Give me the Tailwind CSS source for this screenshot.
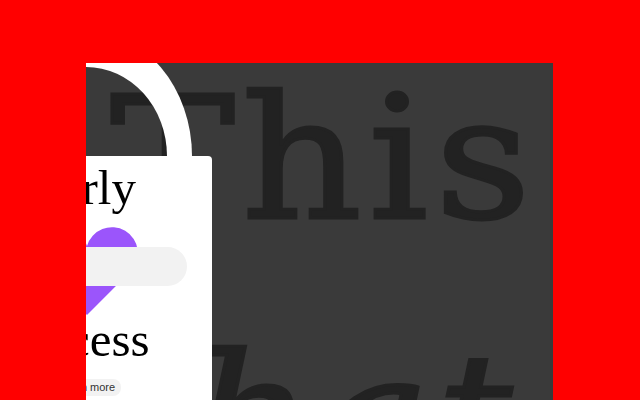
<!DOCTYPE html>
<html lang="en">
<head>
    <meta charset="UTF-8">
    <title>Early access</title>
    <script src="https://cdn.jsdelivr.net/npm/@tailwindcss/browser@4"></script>
</head>
<body class="bg-[#ff0000] w-[640px] h-[400px] overflow-hidden">
    <div class="relative ml-[86px] mt-[63px] w-[467px] h-[337px] bg-[#3a3a3a] overflow-hidden">
        <!-- big background words -->
        <div class="font-['DejaVu_Serif',serif] text-[170px] leading-[258px] tracking-[6px] text-[#222222] [-webkit-text-stroke:3px_#222222] pl-[22px] -mt-[33px] whitespace-nowrap scale-x-[1.1] origin-left">
            <p>This</p>
            <p class="italic">that</p>
        </div>

        <!-- tag: handle + card -->
        <div class="absolute left-[-124px] top-0 w-[250px] h-[337px]">
            <div class="absolute left-[18px] top-[-32px] w-[212px] h-[250px] rounded-[106px/125px] border-x-[25px] border-t-[36px] border-b-0 border-white"></div>
            <div class="absolute left-0 top-[93px] w-[250px] h-[300px] bg-white rounded-[4px] flex flex-col items-center font-['Liberation_Serif',serif] text-black">
                <p class="text-[49px] leading-[50px] mt-[7px]">early</p>
                <svg class="absolute left-0 top-0" width="250" height="170" viewBox="0 0 250 170">
                    <path d="M125 159 L168.4 115.6 A26 26 0 1 0 125 90 A26 26 0 1 0 81.6 115.6 Z" fill="#9b55fb"/>
                </svg>
                <p class="text-[49px] leading-[50px] mt-[102px]">access</p>
                <span class="mt-[14px] px-[6px] h-[17px] leading-[17px] rounded-[8px] bg-[#f2f2f2] font-['Liberation_Sans',sans-serif] text-[11px] text-[#333333]">Learn more</span>
            </div>
            <div class="absolute left-0 top-[184px] w-[225px] h-[39px] rounded-[20px] bg-[#f2f2f2]"></div>
        </div>
    </div>
</body>
</html>
